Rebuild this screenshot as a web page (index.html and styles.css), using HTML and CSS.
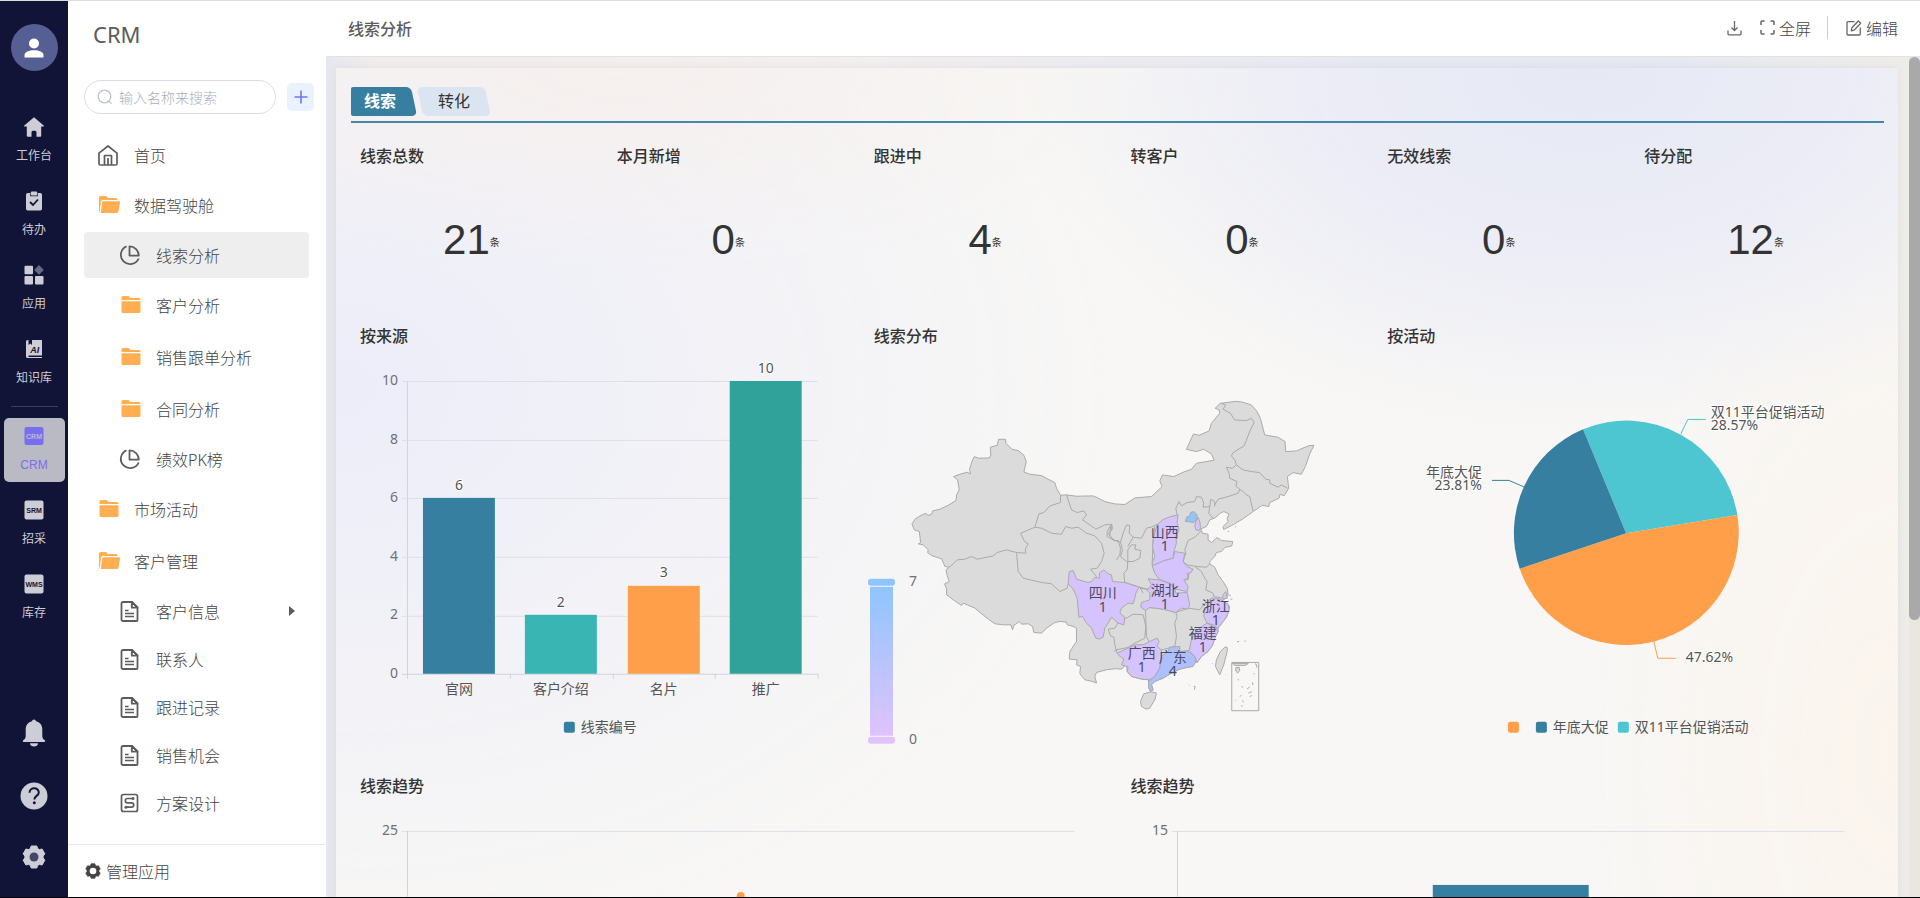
FILE: index.html
```html
<!DOCTYPE html>
<html lang="zh-CN">
<head>
<meta charset="utf-8">
<title>CRM - 线索分析</title>
<link rel="stylesheet" href="styles.css">
</head>
<body>
<svg class="sprite" aria-hidden="true">
  <symbol id="i-folder" viewBox="0 0 20 20"><path fill="#ffaf51" d="M0 2.500a1.500 1.500 0 0 1 1.500-1.500H7l2 2h8.500A1.500 1.500 0 0 1 19 4.500V5H0z"/><path fill="#ffaf51" d="M0 6.200h19v10.300a1.500 1.500 0 0 1-1.500 1.500h-16A1.500 1.500 0 0 1 0 16.500z"/></symbol>
  <symbol id="i-open" viewBox="0 0 21 20"><path fill="#ffaf51" d="M0 16V2.500A1.500 1.500 0 0 1 1.500 1H7l2 2h8a1.500 1.500 0 0 1 1.500 1.500V5H3.800a1.800 1.800 0 0 0-1.800 1.500L.8 17z"/><path fill="#ffaf51" d="M4.200 6.200H20a1 1 0 0 1 1 1.200l-1.600 9.400a1.500 1.500 0 0 1-1.500 1.200H1.800l1.400-11a1 1 0 0 1 1-.8z"/></symbol>
  <symbol id="i-pie" viewBox="0 0 21 21"><g fill="none" stroke="#5c5c5c" stroke-width="1.800"><path d="M7.500 1.300a9.300 9.300 0 1 0 12.200 12.200"/><path d="M10.500 1.300v9.300h9.300a9.300 9.300 0 0 0-9.300-9.300z" stroke-linejoin="round"/></g></symbol>
  <symbol id="i-doc" viewBox="0 0 18 21"><g fill="none" stroke="#5c5c5c" stroke-width="1.800" stroke-linejoin="round"><path d="M2.500 1h9l5.500 5.500V19a1 1 0 0 1-1 1H2.500a1.500 1.500 0 0 1-1.500-1.500v-16A1.500 1.500 0 0 1 2.500 1z"/><path d="M11.300 1v5.700H17z"/><path d="M4.500 9.500H8M4.500 12.500h9M4.500 15.500h9" stroke-width="1.600"/></g></symbol>
  <symbol id="i-gear" viewBox="0 0 24 24"><path d="M9.200 1h5.600l.9 2.600 1.700 1 2.700-.6 2.800 4.900-1.800 2.100v2l1.800 2.100-2.800 4.900-2.700-.6-1.700 1-.9 2.600H9.200l-.9-2.600-1.700-1-2.700.6-2.800-4.900L2.900 13v-2L1.100 8.900 3.900 4l2.700.6 1.700-1z" stroke="currentColor" stroke-linejoin="round" stroke-width="1" fill="currentColor"/></symbol>
</svg>

<div class="app">
  <nav class="rail" aria-label="主导航">
    <button class="avatar" aria-label="用户"><svg width="20" height="20" viewBox="0 0 20 20"><circle cx="10" cy="5.500" r="5" fill="#fff"/><path d="M.5 19.500v-2.500c0-3 4.500-4.800 9.500-4.800s9.500 1.800 9.500 4.800v2.500z" fill="#fff"/></svg></button>
    <div class="rail-group">
      <a class="rail-item" href="#"><svg width="20" height="20" viewBox="0 0 20 20"><path fill="#cdcdd7" d="M10 .3l9.700 8.200a.6.600 0 0 1-.4 1.100H17.200v9.200a1 1 0 0 1-1 1h-3.700v-4.500a1.500 1.500 0 0 0-1.500-1.500H9a1.500 1.500 0 0 0-1.500 1.500v4.500H3.800a1 1 0 0 1-1-1V9.600H.7a.6.600 0 0 1-.4-1.100z"/></svg><span>工作台</span></a>
      <a class="rail-item" href="#"><svg width="20" height="20" viewBox="0 0 20 20"><path fill="#cdcdd7" d="M3.700 2h2.500v3.200h7.600V2h2.500A1.700 1.700 0 0 1 18 3.700v14.100a1.700 1.700 0 0 1-1.700 1.700H3.700A1.700 1.700 0 0 1 2 17.800V3.700A1.700 1.700 0 0 1 3.700 2z"/><rect x="6.800" y=".5" width="6.400" height="4" rx="1" fill="#cdcdd7"/><path d="M6 11l3 3 5-5.500" fill="none" stroke="#111436" stroke-width="1.800"/></svg><span>待办</span></a>
      <a class="rail-item" href="#"><svg width="20" height="20" viewBox="0 0 20 20"><g fill="#cdcdd7"><rect x=".5" y=".8" width="8.500" height="8.500" rx="1"/><rect x=".5" y="11" width="8.500" height="8.500" rx="1"/><rect x="11" y="11" width="8.500" height="8.500" rx="1"/></g><path d="M15 0l4.800 4.900L15 9.800l-4.800-4.900z" fill="#676a85"/></svg><span>应用</span></a>
      <a class="rail-item" href="#"><svg width="20" height="20" viewBox="0 0 20 20"><path fill="#cdcdd7" d="M3.500 1h1v5l1.800-1.500L8 6V1h10v15.500H4.500V18H18v1H3.500A1.500 1.500 0 0 1 2 17.500v-15A1.500 1.500 0 0 1 3.500 1z"/><text x="10.800" y="14" font-size="9" font-weight="bold" font-style="italic" text-anchor="middle" fill="#111436">AI</text></svg><span>知识库</span></a>
      <hr>
      <a class="rail-item active" href="#"><svg width="20" height="20" viewBox="0 0 20 20"><rect x=".5" y="1" width="19" height="18" rx="2" fill="#796eef"/><text x="10" y="12.500" font-size="7" font-weight="bold" text-anchor="middle" fill="#b9bccb">CRM</text></svg><span>CRM</span></a>
      <a class="rail-item" href="#"><svg width="20" height="20" viewBox="0 0 20 20"><rect x=".5" y=".5" width="19" height="19" rx="2" fill="#cdcdd7"/><text x="10" y="12.500" font-size="7" font-weight="bold" text-anchor="middle" fill="#111436">SRM</text></svg><span>招采</span></a>
      <a class="rail-item" href="#"><svg width="20" height="20" viewBox="0 0 20 20"><rect x=".5" y=".5" width="19" height="19" rx="2" fill="#cdcdd7"/><text x="10" y="12.500" font-size="7" font-weight="bold" text-anchor="middle" fill="#111436">WMS</text></svg><span>库存</span></a>
    </div>
    <div class="rail-tools">
      <button aria-label="通知"><svg width="24" height="28" viewBox="0 0 24 28"><path fill="#cdcdd7" d="M12 .5a2 2 0 0 1 2 1.700c4 .9 6.300 4 6.300 8.300v6.500c0 2.500 1.200 3.500 2.500 4.200.8.500.5 1.800-.5 1.800H1.700c-1 0-1.300-1.300-.5-1.800 1.300-.7 2.500-1.700 2.500-4.200v-6.500C3.700 6.200 6 3.100 10 2.200A2 2 0 0 1 12 .5z"/><path fill="#cdcdd7" d="M8 24.200h8c0 4.300-8 4.300-8 0z"/></svg></button>
      <button aria-label="帮助"><svg width="28" height="28" viewBox="0 0 28 28"><circle cx="14" cy="14" r="13.500" fill="#cdcdd7"/><path d="M9.500 10.800c0-6 9.300-5.800 9.300-.3 0 3.300-4.500 3.500-4.500 7" fill="none" stroke="#111436" stroke-width="2"/><circle cx="14.300" cy="20.800" r="1.500" fill="#111436"/></svg></button>
      <button aria-label="设置"><svg width="24" height="24"><use href="#i-gear"/><circle cx="12" cy="12" r="4.500" fill="#43466a"/></svg></button>
    </div>
  </nav>

  <aside class="side">
    <h1>CRM</h1>
    <div class="search-row">
      <label class="search"><svg width="16" height="16" viewBox="0 0 16 16"><circle cx="7.500" cy="7.500" r="6.300" fill="none" stroke="#bfc2cb" stroke-width="1.300"/><path d="M11.500 12l3 2.500" stroke="#bfc2cb" stroke-width="1.300"/></svg><input type="text" placeholder="输入名称来搜索" aria-label="搜索"></label>
      <button class="add" aria-label="新增"><svg width="14" height="14" viewBox="0 0 14 14"><path d="M7 .5v13M.5 7h13" stroke="#6d78fb" stroke-width="1.600"/></svg></button>
    </div>
    <ul class="menu">
      <li><a href="#"><svg width="20" height="21" viewBox="0 0 20 21"><g fill="none" stroke="#5c5c5c" stroke-width="1.700" stroke-linejoin="round"><path d="M10 1l9 7.200V18.500a1.500 1.500 0 0 1-1.500 1.500h-15A1.500 1.500 0 0 1 1 18.500V8.200z"/><path d="M6.500 20v-9.500h7V20M10 13v7" /></g></svg>首页</a></li>
      <li class="dir"><a href="#"><svg width="21" height="20"><use href="#i-open"/></svg>数据驾驶舱</a></li>
      <li class="sub on"><a href="#"><svg width="21" height="21"><use href="#i-pie"/></svg>线索分析</a></li>
      <li class="sub dir"><a href="#"><svg width="21" height="20"><use href="#i-folder"/></svg>客户分析</a></li>
      <li class="sub dir"><a href="#"><svg width="21" height="20"><use href="#i-folder"/></svg>销售跟单分析</a></li>
      <li class="sub dir"><a href="#"><svg width="21" height="20"><use href="#i-folder"/></svg>合同分析</a></li>
      <li class="sub"><a href="#"><svg width="21" height="21"><use href="#i-pie"/></svg>绩效PK榜</a></li>
      <li class="dir"><a href="#"><svg width="21" height="20"><use href="#i-folder"/></svg>市场活动</a></li>
      <li class="dir"><a href="#"><svg width="21" height="20"><use href="#i-open"/></svg>客户管理</a></li>
      <li class="sub"><a href="#"><svg width="21" height="21"><use href="#i-doc"/></svg>客户信息<i class="caret"></i></a></li>
      <li class="sub"><a href="#"><svg width="21" height="21"><use href="#i-doc"/></svg>联系人</a></li>
      <li class="sub"><a href="#"><svg width="21" height="21"><use href="#i-doc"/></svg>跟进记录</a></li>
      <li class="sub"><a href="#"><svg width="21" height="21"><use href="#i-doc"/></svg>销售机会</a></li>
      <li class="sub"><a href="#"><svg width="21" height="21" viewBox="0 0 21 21"><g fill="none" stroke="#5c5c5c" stroke-width="1.700"><rect x="2.500" y="1.500" width="16" height="17" rx="2"/><path d="M14 5.500H8.500a2 2 0 0 0 0 4.300h4a2.200 2.200 0 0 1 0 4.400H7"/></g><circle cx="14" cy="5.500" r="1.500" fill="#5c5c5c"/><circle cx="7" cy="14.200" r="1.500" fill="#5c5c5c"/></svg>方案设计</a></li>
    </ul>
    <button class="manage"><svg width="16" height="16" viewBox="0 0 24 24"><use href="#i-gear"/><circle cx="12" cy="12" r="5" fill="#fff"/></svg>管理应用</button>
  </aside>

  <main class="main">
    <header class="top">
      <h2>线索分析</h2>
      <div class="actions">
        <button aria-label="下载"><svg width="15" height="16" viewBox="0 0 15 16"><path d="M7.500 1v9.500M4.500 7.500l3 3 3-3M1 10.500v3.300a1 1 0 0 0 1 1h11a1 1 0 0 0 1-1v-3.300" fill="none" stroke="#666" stroke-width="1.300"/></svg></button>
        <button class="full"><svg width="15" height="15" viewBox="0 0 15 15"><path d="M1 5V2a1 1 0 0 1 1-1h2.500M10.500 1H13a1 1 0 0 1 1 1v3M14 10v3a1 1 0 0 1-1 1h-2.500M4.500 14H2a1 1 0 0 1-1-1v-3" fill="none" stroke="#666" stroke-width="1.500"/></svg>全屏</button>
        <button class="edit"><svg width="16" height="16" viewBox="0 0 16 16"><path d="M8.500 1.700H2a1 1 0 0 0-1 1V14a1 1 0 0 0 1 1h11.300a1 1 0 0 0 1-1V7.500M5.300 10.800l.6-3L12.300 1l2.400 2.300-6.500 6.800z" fill="none" stroke="#666" stroke-width="1.300" stroke-linejoin="round"/></svg>编辑</button>
      </div>
    </header>
    <div class="stage">
      <div class="scroll">
        <section class="board">
          <div class="tabs" role="tablist">
            <button class="tab current" role="tab" aria-selected="true"><span>线索</span></button>
            <button class="tab" role="tab" aria-selected="false"><span>转化</span></button>
          </div>
          <div class="grid">
            <article class="card stat"><h3>线索总数</h3><p>21<small>条</small></p></article>
            <article class="card stat"><h3>本月新增</h3><p>0<small>条</small></p></article>
            <article class="card stat"><h3>跟进中</h3><p>4<small>条</small></p></article>
            <article class="card stat"><h3>转客户</h3><p>0<small>条</small></p></article>
            <article class="card stat"><h3>无效线索</h3><p>0<small>条</small></p></article>
            <article class="card stat"><h3>待分配</h3><p>12<small>条</small></p></article>

            <article class="card third"><h3>按来源</h3>
              <svg class="chart" viewBox="0 0 498 412">
                <path class="split" d="M51 33.500H467M51 92.500H467M51 150.500H467M51 209.500H467M51 268.500H467"/>
                <path class="axis" d="M56.500 33V331M51 326.500H467M159.500 326v5M262.500 326v5M364.500 326v5M467.500 326v5"/>
                <rect x="72" y="150" width="72" height="176" fill="#367fa0"/>
                <rect x="174" y="267" width="72" height="59" fill="#39b5b4"/>
                <rect x="277" y="238" width="72" height="88" fill="#ff9f4a"/>
                <rect x="379" y="33" width="72" height="293" fill="#30a29a"/>
                <g class="num" text-anchor="end"><text x="47" y="37">10</text><text x="47" y="96">8</text><text x="47" y="154">6</text><text x="47" y="213">4</text><text x="47" y="271">2</text><text x="47" y="330">0</text></g>
                <g class="halo" text-anchor="middle"><text x="108" y="142">6</text><text x="210" y="259">2</text><text x="313" y="229">3</text><text x="415" y="25">10</text></g>
                <g class="cat" text-anchor="middle"><text x="108" y="346">官网</text><text x="210" y="346">客户介绍</text><text x="313" y="346">名片</text><text x="415" y="346">推广</text></g>
                <rect x="213" y="374" width="11" height="11" rx="2" fill="#367fa0"/><text class="cat" x="230" y="384">线索编号</text>
              </svg>
            </article>

            <article class="card third"><h3>线索分布</h3>
              <svg class="chart" viewBox="0 0 498 412">
                <defs><linearGradient id="vm" x2="0" y2="1"><stop offset="0" stop-color="#8fc5fd"/><stop offset="1" stop-color="#dfc3fd"/></linearGradient></defs>
                <rect x="5" y="239" width="23" height="149" fill="url(#vm)"/>
                <rect x="3" y="231" width="27" height="7" rx="3" fill="#8fc5fd"/><rect x="3" y="389" width="27" height="7" rx="3" fill="#dfc3fd"/>
                <g class="num" text-anchor="middle"><text x="48" y="238">7</text><text x="48" y="396">0</text></g>
                <g transform="translate(-5 32) scale(.33333)" fill="#dbdbdb" stroke="#aaa" stroke-width="3" stroke-linejoin="round">
                  <path d="M156 433L165 418 180 408 198 400 203 407 215 403 218 393 240 388 265 376 288 362 290 345 298 330 293 300 281 290 300 283 322 277 332 282 329 268 336 245 343 230 356 235 388 234 393 225 391 202 412 196 416 178 437 178 438 190 456 208 475 212 492 226 499 245 492 276 510 283 545 287 565 298 585 308 590 325 602 346 620 345 650 349 700 348 712 353 735 365 765 372 795 374 825 354 875 350 907 320 900 303 908 285 942 290 970 277 995 268 1010 250 1063 241 1055 222 1032 208 1010 215 980 208 1001 162 1018 166 1048 153 1055 130 1080 100 1078 90 1066 85 1082 70 1130 64 1150 67 1175 75 1190 92 1202 115 1215 165 1255 172 1276 185 1278 215 1310 213 1345 198 1363 196 1357 208 1350 222 1337 260 1325 283 1300 278 1283 290 1287 325 1273 348 1261 343 1258 355 1230 368 1227 380 1208 376 1180 395 1148 418 1115 437 1092 449 1090 440 1105 425 1102 415 1108 402 1092 395 1082 400 1065 414 1050 420 1040 440 1023 447 1028 460 1045 463 1045 480 1055 488 1072 473 1085 482 1119 485 1116 498 1095 503 1085 515 1070 518 1065 530 1050 545 1050 552 1065 562 1075 585 1090 605 1103 627 1105 645 1098 655 1088 662 1110 680 1108 690 1100 712 1090 725 1075 745 1075 755 1065 775 1058 797 1045 815 1025 830 1012 848 1005 846 985 860 960 868 935 880 910 895 885 905 875 915 880 930 872 935 867 925 866 900 845 898 815 890 802 875 800 852 786 868 765 867 740 870 710 878 705 890 710 910 697 905 675 900 660 882 662 860 650 855 652 840 628 838 630 815 650 785 650 745 640 740 622 735 620 727 600 725 585 728 560 745 545 760 522 758 518 740 505 732 485 733 478 725 462 737 458 750 453 735 430 735 405 732 385 718 345 685 310 670 305 677 280 660 260 645 260 628 254 612 268 605 262 588 258 570 268 562 255 560 245 537 215 527 203 518 205 510 190 495 175 492 182 488 178 455 163 450z"/>
                  <g fill="none">
                    <path d="M268 562L280 552 292 540 315 538 335 530 352 538 400 528 412 518 440 510 470 518 498 520 496 508 505 492 494 485 482 460 525 442 537 402 552 398 570 378 602 368 602 346"/>
                    <path d="M470 518L475 575 490 595 545 608 575 612 600 635 622 625 625 612M525 442L545 445 575 460 605 463 617 440 635 445 655 442 680 460 705 468 725 490 733 520 725 545 712 565 692 568 710 590"/>
                    <path d="M620 345L635 390 652 398 672 393 680 405 668 420 690 435 708 448 735 435 755 433 742 455 742 470 765 483 775 482 782 505 780 525 770 540M755 433L757 437 755 452"/>
                    <path d="M765 483L750 468 752 438M755 434L757 448 745 460 760 480 782 487 790 460 800 435 810 437 808 460 820 472 845 475 860 445 880 440 892 432"/>
                    <path d="M782 487L788 510 782 530 800 545 820 545 840 535 843 512 825 508 828 495 815 495 804 510 804 545 802 570 792 580 795 608M820 472L804 500"/>
                    <path d="M885 440L880 480 877 555M795 608L840 622 870 630M952 405L948 385 958 365 965 378 982 368 1005 365 1010 350 1025 352 1032 370 1030 382 1050 380 1053 358 1065 365 1065 380M1050 380L1047 400 1060 415"/>
                    <path d="M1065 375L1075 358 1105 350 1135 340 1140 328 1150 335 1160 345 1170 350 1180 393M1140 328L1128 318 1132 305 1110 295 1108 280 1100 262 1118 265 1130 255 1150 270 1175 275 1200 278 1218 298 1230 300 1230 310 1255 322 1265 315 1283 325"/>
                    <path d="M1130 255L1125 240 1115 228 1120 218 1153 198 1158 185 1172 150 1183 128 1175 115 1160 122 1125 120 1112 100 1090 88 1098 75 1082 70"/>
                    <path d="M1023 455L1005 472 985 482 975 510 978 520 970 545 982 555 1010 560 1040 562 1050 552M1005 560L1025 575 1032 590 1042 605 1038 630 1060 640 1062 650 1088 655"/>
                    <path d="M1000 570L988 580 985 600 972 600M985 685L1020 690 1032 675 1055 655"/>
                    <path d="M857 690L870 683 910 688 948 698 952 710 945 730 950 770 945 800 915 808 900 812 890 800 870 790 860 770zM948 698L985 685M945 800L960 815 988 812"/>
                    <path d="M765 745L780 720 800 715 820 703 850 705 858 740 855 775 825 790 805 803 770 810 762 815M765 745L745 748 752 768 762 772 765 795 772 820M840 622L850 640M870 630L840 625"/>
                  </g>
                  <g fill="#d5c3fd">
                    <path d="M625 612L628 575 640 572 650 598 685 608 695 605 705 592 720 595 718 580 732 570 745 582 755 585 758 605 795 608 838 622 828 640 825 655 820 672 805 670 785 685 780 700 795 712 792 735 775 730 762 718 755 712 748 725 735 745 730 772 718 778 708 775 695 745 680 730 668 710 657 712 652 655 640 628z"/>
                    <path d="M892 435L908 420 932 410 955 405 952 430 958 450 948 470 950 490 942 515 940 535 915 542 895 550 880 557 877 550 885 530 878 500 882 470z"/>
                    <path d="M877 558L915 542 940 535 945 515 975 520 970 545 982 560 1000 568 992 580 982 580 985 595 972 600 985 620 982 635 948 628 930 610 898 598 885 580z"/>
                    <path d="M865 597L898 600 930 612 945 625 948 640 982 638 990 675 985 688 965 685 948 698 910 688 870 683 857 692 843 682 845 668 870 660 870 640 862 632 875 615z"/>
                    <path d="M1055 655L1075 655 1105 672 1108 690 1100 712 1090 725 1075 745 1060 735 1042 730 1032 710 1035 690 1045 675zM1088 658L1090 645 1098 635 1103 655z"/>
                    <path d="M1042 730L1070 745 1075 755 1065 775 1058 797 1045 815 1025 830 1012 848 1005 830 988 812 995 780 1010 755 1025 740z"/>
                    <path d="M772 820L805 805 825 795 850 795 870 785 892 775 898 785 892 798 905 812 905 830 900 865 885 890 870 900 845 898 815 890 802 875 805 862 785 855 792 838 778 828z"/>
                    <path d="M1008 425L1015 412 1020 425 1022 440 1020 452 1008 450 1005 438z"/>
                  </g>
                  <path fill="#aebffd" d="M930 802L960 800 960 815 985 815 1005 830 1008 846 1000 860 960 868 935 880 910 895 885 905 875 915 880 930 872 935 867 925 866 905 885 890 900 865 905 830 925 815z"/>
                  <path fill="#8fc5fd" d="M977 425L980 412 990 408 992 398 1002 395 1012 405 1010 420 1000 428 985 425z"/>
                  <path d="M842 965L852 942 875 936 890 940 885 960 870 985 858 988 845 980zM1102 802L1103 812 1092 855 1080 885 1067 860 1070 840 1082 815 1095 802z"/>
                  <path fill="none" d="M1116 848h81v145h-81z"/>
                  <path d="M1118 851h48l-10 6h-30zM1128 864l10-2 2 10-6 8-6-6zM1186 852l4 2 2 10"/>
                  <path fill="none" d="M1135 897l1 5M1182 880l2 4M1178 908l2 8M1145 920l5 3M1162 927l8-5M1166 940l10-4M1170 952l6-6M1140 950l5-3M1127 962l1 2M1148 962l3 6M1146 976l1 5M987 915l2 2M1002 920h4l-2 10M1154 784l4 0M1132 786l6-1M1057 850l1 2M1104 455l4-1M1126 441l3 0M1107 645l6 3M1112 658l6 0M1098 885l1 1"/>
                </g>
                <g class="maplab" text-anchor="middle">
                  <text x="238" y="250">四川<tspan x="238" dy="14">1</tspan></text>
                  <text x="300" y="189">山西<tspan x="300" dy="14">1</tspan></text>
                  <text x="300" y="247">湖北<tspan x="300" dy="14">1</tspan></text>
                  <text x="351" y="263">浙江<tspan x="351" dy="14">1</tspan></text>
                  <text x="338" y="290">福建<tspan x="338" dy="14">1</tspan></text>
                  <text x="277" y="310">广西<tspan x="277" dy="14">1</tspan></text>
                  <text x="308" y="314">广东<tspan x="308" dy="14">4</tspan></text>
                </g>
              </svg>
            </article>

            <article class="card third"><h3>按活动</h3>
              <svg class="chart" viewBox="0 0 498 412">
                <path fill="#4dc6d2" d="M248.300 185.300L205.200 81.300A112.600 112.600 0 0 1 359.600 167z"/>
                <path fill="#ff9f4a" d="M248.300 185.300L359.600 167A112.600 112.600 0 0 1 141.800 220.900z"/>
                <path fill="#367fa0" d="M248.300 185.300L141.800 220.900A112.600 112.600 0 0 1 205.200 81.300z"/>
                <g fill="none"><path stroke="#4dc6d2" d="M303 86L310 71.500H328"/><path stroke="#367fa0" d="M146 139L131 132.500H114"/><path stroke="#ff9f4a" d="M276 294L280 310.500H298"/></g>
                <g class="halo"><text x="333" y="69">双11平台促销活动<tspan x="333" dy="13">28.57%</tspan></text><text x="104" y="129" text-anchor="end">年底大促<tspan x="104" dy="13">23.81%</tspan></text><text x="308" y="314">47.62%</text></g>
                <rect x="130" y="374" width="11" height="11" rx="2" fill="#ff9f4a"/><rect x="158" y="374" width="11" height="11" rx="2" fill="#367fa0"/><rect x="240" y="374" width="11" height="11" rx="2" fill="#4dc6d2"/>
                <g class="cat"><text x="175" y="384">年底大促</text><text x="257" y="384">双11平台促销活动</text></g>
              </svg>
            </article>

            <article class="card half"><h3>线索趋势</h3>
              <svg class="chart" viewBox="0 0 755 412">
                <path class="split" d="M51 33.500H724"/><path class="axis" d="M56.500 33V327H724"/>
                <text class="num" x="47" y="37" text-anchor="end">25</text>
                <circle cx="390" cy="98" r="4" fill="#ff9f4a"/>
              </svg>
            </article>
            <article class="card half"><h3>线索趋势</h3>
              <svg class="chart" viewBox="0 0 755 412">
                <path class="split" d="M51 33.500H724"/><path class="axis" d="M56.500 33V327H724"/>
                <text class="num" x="47" y="37" text-anchor="end">15</text>
                <rect x="312" y="87" width="156" height="240" fill="#367fa0"/>
              </svg>
            </article>
          </div>
        </section>
      </div>
      <div class="bar" aria-hidden="true"><i></i></div>
    </div>
  </main>
</div>
</body>
</html>
```
FILE: styles.css
```css
* { box-sizing: border-box; margin: 0; padding: 0; }
body { font-family: "Noto Sans", "Noto Sans CJK SC", sans-serif; font-size: 16px; color: #5c5c5c; }
button, input { font: inherit; color: inherit; border: 0; background: none; }
a { color: inherit; text-decoration: none; }
ul { list-style: none; }
svg { display: block; flex: none; }
.sprite { width: 0; height: 0; position: absolute; }

.app { display: flex; height: 100vh; border-top: 1px solid #ddd; border-bottom: 1px solid #000; overflow: hidden; background: #fff; }

.rail { flex: none; width: 68px; background: #111436; display: flex; flex-direction: column; align-items: center; padding: 23px 0 28px; color: #cdcdd7; font-size: 12px; }
.avatar { width: 47px; height: 47px; border-radius: 50%; background: #565f93; display: grid; place-items: center; }
.rail-group { display: flex; flex-direction: column; align-items: center; gap: 10px; margin-top: 38px; font-family: "Liberation Sans", "Noto Sans CJK SC", sans-serif; }
.rail-item { width: 61px; height: 64px; padding-top: 8px; border-radius: 5px; display: flex; flex-direction: column; align-items: center; gap: 10px; line-height: 18px; }
.rail-item.active { background: #b9bac3; color: #796eef; }
.rail-group hr { width: 47px; margin: 1px 0; border: 0; border-top: 1px solid #3c3f5d; }
.rail-tools { margin-top: auto; display: flex; flex-direction: column; align-items: center; gap: 35px; color: #cdcdd7; }

.side { flex: none; width: 258px; display: flex; flex-direction: column; font-weight: 300; }
.side h1 { font-size: 22px; font-weight: 400; line-height: 30px; padding: 18px 0 0 25px; }
.search-row { display: flex; align-items: center; gap: 11px; padding: 31px 12px 0 16px; }
.search { flex: 1; height: 34px; border: 1px solid #dcdde8; border-radius: 17px; display: flex; align-items: center; gap: 6px; padding: 0 12px; }
.search input { width: 100%; min-width: 0; font-size: 14px; outline: 0; }
.search input::placeholder { color: #a9adb8; opacity: 1; }
.add { width: 27px; height: 28px; border-radius: 5px; background: #e9f2fe; display: grid; place-items: center; }
.menu { padding: 17px 17px 0 16px; }
.menu li { height: 48px; padding: 1px 0; }
.menu li.dir { height: 52px; padding: 3px 0; }
.menu a { height: 46px; display: flex; align-items: center; gap: 16px; padding-left: 14px; border-radius: 4px; color: #444; }
.menu .sub a { padding-left: 35px; }
.menu .dir a { gap: 14px; padding-left: 15px; }
.menu .sub.dir a { padding-left: 37px; }
.menu .on a { background: #eee; }
.caret { margin: 0 14px 0 auto; border: 5px solid transparent; border-left: 6px solid #5c5c5c; border-right: 0; }
.manage { margin-top: auto; height: 53px; border-top: 1px solid #e8e8e8; display: flex; align-items: center; gap: 5px; padding-left: 17px; color: #444; }

.main { flex: 1; min-width: 0; display: flex; flex-direction: column; }
.top { flex: none; height: 56px; border-bottom: 1px solid #e2e2e2; display: flex; align-items: center; justify-content: space-between; padding: 0 22px 2px; }
.top h2 { font-size: 16px; font-weight: 500; }
.actions { display: flex; align-items: center; gap: 18px; }
.actions button { display: flex; align-items: center; gap: 4px; font-weight: 300; color: #444; }
.actions .edit { border-left: 1px solid #ccc; height: 23px; padding-left: 18px; }
.actions .full { margin-right: -2px; }

.stage { flex: 1; min-height: 0; display: flex; background: linear-gradient(90deg, #e6e7ef, #f1edec 3%, #f3efee 30%, #e7e9f2 65%, #e7e9f2 85%, #efede9); }
.scroll { flex: 1; min-width: 0; overflow-y: auto; scrollbar-width: none; padding: 11px 11px 11px 10px; }
.bar { flex: none; width: 11px; background: #eae7e1; }
.bar i { display: block; height: 67%; border-radius: 6px; background: #a9a9a9; }

.board { padding: 19px 14px 0 15px; box-shadow: 0 0 10px rgba(0, 0, 0, .06); background:
    radial-gradient(ellipse 36% 32% at 80% 0, #e6e9f4, #ebecf6 45%, transparent),
    radial-gradient(ellipse 36% 18% at 18% 0, #f6f0ee, transparent),
    radial-gradient(ellipse 50% 50% at 0 28%, #ecedf9, #f2f2f7 50%, transparent),
    radial-gradient(ellipse 20% 50% at 100% 60%, #fbf4ed, transparent),
    #f8f7f5; }
.tabs { display: flex; gap: 6px; padding-bottom: 5px; border-bottom: 2px solid #4487a9; }
.tab { position: relative; isolation: isolate; height: 29px; padding: 0 18px; line-height: 29px; color: #333; }
.tab::before { content: ""; position: absolute; z-index: -1; inset: 0; border-radius: 5px; background: #dbe5f2; transform: skewX(12deg); }
.tab.current { padding-left: 13px; color: #fff; font-weight: 700; }
.tab.current::before { left: 8px; background: #367fa0; }
.tab.current::after { content: ""; position: absolute; z-index: -1; inset: 0 40px 0 0; border-radius: 2px; background: #367fa0; }

.grid { display: grid; grid-template-columns: repeat(6, minmax(0, 1fr)); column-gap: 8px; padding-top: 7px; }
.card { padding: 14px 8px 0 0; }
.card h3 { font-size: 16px; font-weight: 500; line-height: 24px; color: #333; padding-left: 9px; }
.third { grid-column: span 2; }
.half { grid-column: span 3; }
.stat { height: 180px; }
.stat p { font-family: "Liberation Sans", "Noto Sans CJK SC", sans-serif; font-size: 42px; line-height: 48px; color: #333; text-align: center; padding-top: 48px; }
.stat small { font-size: 10px; vertical-align: 8px; }

.chart { width: 100%; height: auto; font-size: 14px; }
.split { stroke: #dfe0e4; fill: none; }
.axis { stroke: #d2d3d9; fill: none; }
.num { fill: #6e7079; }
.cat { fill: #555; }
.halo { fill: #555; stroke: #fff; stroke-width: 2px; paint-order: stroke; }
.maplab { fill: #4b4a66; }
```
